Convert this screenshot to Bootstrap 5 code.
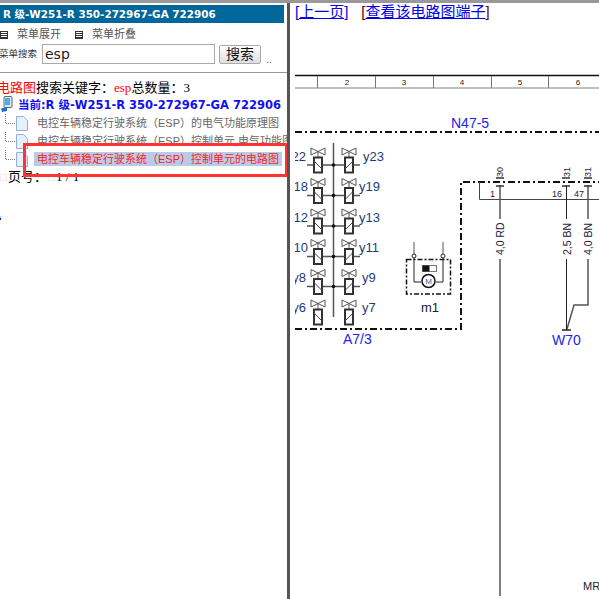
<!DOCTYPE html>
<html lang="zh">
<head>
  <meta charset="UTF-8" />
  <meta name="viewport" content="width=device-width, initial-scale=1" />
  <title>电路图</title>
  <link href="https://cdn.jsdelivr.net/npm/bootstrap@5.3.0/dist/css/bootstrap.min.css" rel="stylesheet" />
  <style>
    html, body { height: 100%; overflow: hidden; }
    body {
      background: #fff;
      border-top: 3px solid #999;
      font-family: "Liberation Sans", "Noto Sans CJK SC", sans-serif;
      font-size: 12px;
      color: #000;
    }
    .page-wrap { height: 596px; }
    .left-pane { width: 287px; flex: none; position: relative; overflow: hidden; }
    .pane-split { width: 3px; flex: none; background: #555; }
    .right-pane { flex: 1; min-width: 0; overflow: hidden; }

    .title-bar {
      width: 284px; height: 18px; margin-top: 2px; padding-left: 3px;
      background: #00679a; color: #fff;
      font: bold 10.4px/18px "DejaVu Sans", "Noto Sans CJK SC", sans-serif;
      white-space: nowrap;
    }
    .menu-row { height: 19px; margin-top: 2px; color: #555; font-size: 11px; line-height: 19px; }
    .menu-btn { width: 8px; height: 8px; border: 1px solid #333; background: repeating-linear-gradient(#fff 0 1px, #333 1px 2px); flex: none; }
    .menu-item { width: 75px; gap: 9px; }
    .search-row { height: 20px; }
    .search-label { width: 43px; font-size: 9.5px; color: #333; white-space: nowrap; margin-left: -1px; }
    .search-input {
      width: 173px; height: 20px; padding: 0 2px; border: 1px solid #aaa;
      font: 14px "DejaVu Sans", sans-serif; color: #222; outline: 0; border-radius: 0;
    }
    .search-btn {
      width: 42px; height: 19px; margin-left: 4px; padding: 0; border: 1px solid #aaa; border-radius: 2px;
      background: linear-gradient(#fff, #ddd); font-size: 14px; line-height: 17px; color: #111;
    }
    .dots-mark { margin-left: 5px; align-self: flex-end; font-size: 11px; line-height: 10px; color: #555; }
    .pane-rule { height: 1px; margin: 8px 0 0; background: #999; }

    .result-line { height: 16px; margin-top: 7px; margin-left: -3px; font-size: 13px; line-height: 16px; white-space: nowrap; }
    .hit-red { color: #f00; }
    .serif-txt { font-family: "Liberation Serif", serif; }
    .cur-node { height: 18px; color: #1111ee; white-space: nowrap; font: bold 11.5px/18px "DejaVu Sans", "Noto Sans CJK SC", sans-serif; }
    .tree-row { height: 18px; line-height: 18px; color: #666; font-size: 11px; white-space: nowrap; }
    .tree-pic { width: 30px; flex: none; }
    .tree-txt { margin-left: 4px; padding: 0 3px; }
    .tree-txt.is-sel { background: #b8cce8; color: #f22; line-height: 14px; }
    .pager-line { height: 18px; font-size: 13px; line-height: 18px; white-space: nowrap; }
    .pager-box { width: 7px; height: 7px; border: 1px solid #eee; flex: none; margin: 0 1px 0 0; }
    .pager-txt { margin-right: 1px; }
    .edge-dot { width: 1px; height: 4px; margin-top: 30px; background: linear-gradient(#8ef 50%, #11e 50%); }

    .red-mark { position: absolute; left: 23px; top: 140px; width: 265px; height: 34px; border: 3px solid #f33; }

    .link-row { height: 57px; padding-left: 5px; font-size: 15px; line-height: 18px; color: #600; white-space: nowrap; }
    .link-row a { color: #00e; }
    .link-gap { margin-left: 13px; }
    .sheet { display: block; width: 304px; height: 536px; margin-left: 5px; }
    .sheet text { font-family: "Liberation Sans", sans-serif; }
  </style>
</head>
<body>
  <div class="page-wrap d-flex">

    <!-- left tree -->
    <div class="left-pane">
      <div class="title-bar">R 级-W251-R 350-272967-GA 722906</div>
      <div class="menu-row d-flex align-items-center">
        <div class="menu-item d-flex align-items-center"><span class="menu-btn"></span><span>菜单展开</span></div>
        <div class="menu-item d-flex align-items-center"><span class="menu-btn"></span><span>菜单折叠</span></div>
      </div>
      <div class="search-row d-flex align-items-center">
        <span class="search-label">菜单搜索</span>
        <input class="search-input" type="text" value="esp" />
        <button class="search-btn" type="button">搜索</button>
        <span class="dots-mark">..</span>
      </div>
      <div class="pane-rule"></div>

      <div class="result-line"><span class="hit-red">电路图</span>搜索关键字：<span class="hit-red serif-txt">esp</span>总数量：<span class="serif-txt">3</span></div>
      <div class="cur-node d-flex">
        <svg width="18" height="18" viewBox="0 0 18 18">
          <rect x="4" y="0.5" width="8" height="11" rx="1" fill="#dfe6ee" stroke="#667"/>
          <rect x="5" y="2" width="5" height="7" fill="#3fb4ec"/>
          <path d="M1 12.5L7 11V15L2 16Z" fill="#1f6fd0"/>
        </svg>
        <span>当前:R 级-W251-R 350-272967-GA 722906</span>
      </div>
      <div class="tree-row d-flex">
        <svg class="tree-pic" height="18" viewBox="0 0 30 18">
          <path d="M5.5 0V9.5H16" fill="none" stroke="#777" stroke-dasharray="1 1"/>
          <path d="M16.500 2.500h7l4 4v10H16.500z" fill="#e6f0fb" stroke="#8fb0dc"/>
        </svg>
        <span class="tree-txt">电控车辆稳定行驶系统（ESP）的电气功能原理图</span>
      </div>
      <div class="tree-row d-flex">
        <svg class="tree-pic" height="18" viewBox="0 0 30 18">
          <path d="M5.5 0V9.5H16" fill="none" stroke="#777" stroke-dasharray="1 1"/>
          <path d="M16.500 2.500h7l4 4v10H16.500z" fill="#e6f0fb" stroke="#8fb0dc"/>
        </svg>
        <span class="tree-txt">电控车辆稳定行驶系统（ESP）控制单元,电气功能图</span>
      </div>
      <div class="tree-row d-flex">
        <svg class="tree-pic" height="18" viewBox="0 0 30 18">
          <path d="M5.5 0V9.5H16" fill="none" stroke="#777" stroke-dasharray="1 1"/>
          <path d="M16.500 2.500h7l4 4v10H16.500z" fill="#e6f0fb" stroke="#8fb0dc"/>
        </svg>
        <span class="tree-txt is-sel align-self-center">电控车辆稳定行驶系统（ESP）控制单元的电路图</span>
      </div>
      <div class="pager-line d-flex align-items-center">
        <span class="pager-box"></span><span class="pager-txt">页号：</span><span class="pager-box"></span><span class="serif-txt">1 / 1</span>
      </div>
      <div class="edge-dot"></div>

      <div class="red-mark"></div>
    </div>

    <div class="pane-split"></div>

    <!-- right drawing -->
    <div class="right-pane">
      <div class="link-row"><a href="#">[上一页]</a><span class="link-gap">[</span><a href="#">查看该电路图端子</a>]</div>

      <!-- viewBox uses screen coordinates -->
      <svg class="sheet" viewBox="295 60 304 536" fill="none">
        <defs>
          <g id="valve">
            <path d="M-7 -17L7 -10V-17L-7 -10Z" stroke="#555" fill="#fff"/>
            <path d="M0 -13V-8" stroke="#555"/>
            <rect x="-4" y="-7.5" width="8" height="15" stroke="#333" stroke-width="2" fill="#fff"/>
          </g>
        </defs>

        <!-- column ruler -->
        <path d="M295 75.5H599" stroke="#111" stroke-width="1.5"/>
        <path d="M295 88H599" stroke="#aaa" stroke-width="1.5"/>
        <path d="M317.5 76V88M375.5 76V88M433.5 76V88M491.5 76V88M548.5 76V88" stroke="#777"/>
        <g fill="#222" font-size="8" text-anchor="middle">
          <text x="347" y="85">2</text><text x="404" y="85">3</text><text x="462" y="85">4</text><text x="520" y="85">5</text><text x="578" y="85">6</text>
        </g>

        <!-- N47-5 frame -->
        <text x="451" y="128" font-size="14" fill="#22e">N47-5</text>
        <path d="M295 132H599M295 329H461V182H599" stroke="#111" stroke-width="2" stroke-dasharray="7 3 2 3"/>
        <text x="343" y="344" font-size="14" fill="#22e">A7/3</text>

        <!-- valve block -->
        <path d="M333.5 143V317" stroke="#555" stroke-width="1.5"/>
        <path d="M307 165H360M307 195.5H360M307 226H360M307 256.5H360M307 286.5H360" stroke="#555" stroke-width="1.5"/>
        <g fill="#111">
          <circle cx="333.5" cy="165" r="1.8"/><circle cx="333.5" cy="195.5" r="1.8"/><circle cx="333.5" cy="226" r="1.8"/><circle cx="333.5" cy="256.5" r="1.8"/><circle cx="333.5" cy="286.5" r="1.8"/>
        </g>
        <use href="#valve" x="318" y="165"/><use href="#valve" x="349" y="165"/>
        <use href="#valve" x="318" y="195.5"/><use href="#valve" x="349" y="195.5"/>
        <use href="#valve" x="318" y="226"/><use href="#valve" x="349" y="226"/>
        <use href="#valve" x="318" y="256.5"/><use href="#valve" x="349" y="256.5"/>
        <use href="#valve" x="318" y="286.5"/><use href="#valve" x="349" y="286.5"/>
        <use href="#valve" x="318" y="317"/><use href="#valve" x="349" y="317"/>
        <path d="M314 161L322 169M353 161L345 169M314 191.5L322 199.5M353 191.5L345 199.5M314 222L322 230M353 222L345 230M314 252.5L322 260.5M353 252.5L345 260.5M314 282.5L322 290.5M353 282.5L345 290.5M314 313L322 321M353 313L345 321" stroke="#444"/>
        <g font-size="13" fill="#1c3c78">
          <g text-anchor="end">
            <text x="306" y="161">y22</text>
            <text x="308" y="191">y18</text>
            <text x="308" y="222">y12</text>
            <text x="308" y="252">y10</text>
            <text x="306" y="282">y8</text>
            <text x="306" y="312">y6</text>
          </g>
          <text x="363" y="161">y23</text>
          <text x="359" y="191">y19</text>
          <text x="359" y="222">y13</text>
          <text x="359" y="252">y11</text>
          <text x="362" y="282">y9</text>
          <text x="362" y="312">y7</text>
        </g>

        <!-- m1 motor -->
        <path d="M414 242V255M443 242V255" stroke="#555"/>
        <rect x="406.5" y="259.5" width="44" height="34.5" stroke="#111" stroke-width="1.5" stroke-dasharray="5 2 2 2"/>
        <path d="M414 258V282H421M443 258V282H436" stroke="#222"/>
        <circle cx="414" cy="256" r="2" stroke="#222" fill="#fff"/><circle cx="443" cy="256" r="2" stroke="#222" fill="#fff"/>
        <rect x="422.5" y="265.5" width="14" height="6" stroke="#777" fill="#fff"/>
        <rect x="422.5" y="265.5" width="7" height="6" fill="#111"/>
        <circle cx="428.5" cy="281" r="6.5" stroke="#111" stroke-width="1.5" fill="#fff"/>
        <text x="428.5" y="284" font-size="8" fill="#558" text-anchor="middle">M</text>
        <text x="421" y="312" font-size="13" fill="#123">m1</text>

        <!-- wires -->
        <path d="M479.5 182V199.5H599" stroke="#444"/>
        <path d="M500 185V219M500 259V596M588 185V219M588 259V305H574L567 329" stroke="#555" stroke-width="1.5"/>
        <path d="M566.5 185V219M566.5 259V330" stroke="#222"/>
        <path d="M562 330H571" stroke="#222" stroke-width="1.5"/>
        <path d="M496 178H504M496 186H504M562 178H570M562 186H570M584 178H592M584 186H592" stroke="#333" stroke-width="1.5"/>
        <g font-size="9" fill="#223">
          <text transform="translate(503 177) rotate(-90)">30</text>
          <text transform="translate(570 177) rotate(-90)">31</text>
          <text transform="translate(591 177) rotate(-90)">31</text>
          <text x="490" y="197">1</text><text x="552" y="197">16</text><text x="574" y="197">47</text>
        </g>
        <g font-size="10.5" fill="#223">
          <text transform="translate(504 255) rotate(-90)">4,0 RD</text>
          <text transform="translate(570.5 255) rotate(-90)">2,5 BN</text>
          <text transform="translate(592 255) rotate(-90)">4,0 BN</text>
        </g>
        <text x="552" y="345" font-size="14" fill="#22e">W70</text>
        <text x="583" y="590" font-size="11" fill="#223">MR</text>
      </svg>
    </div>
  </div>

  <script src="https://cdn.jsdelivr.net/npm/bootstrap@5.3.0/dist/js/bootstrap.bundle.min.js"></script>
</body>
</html>
